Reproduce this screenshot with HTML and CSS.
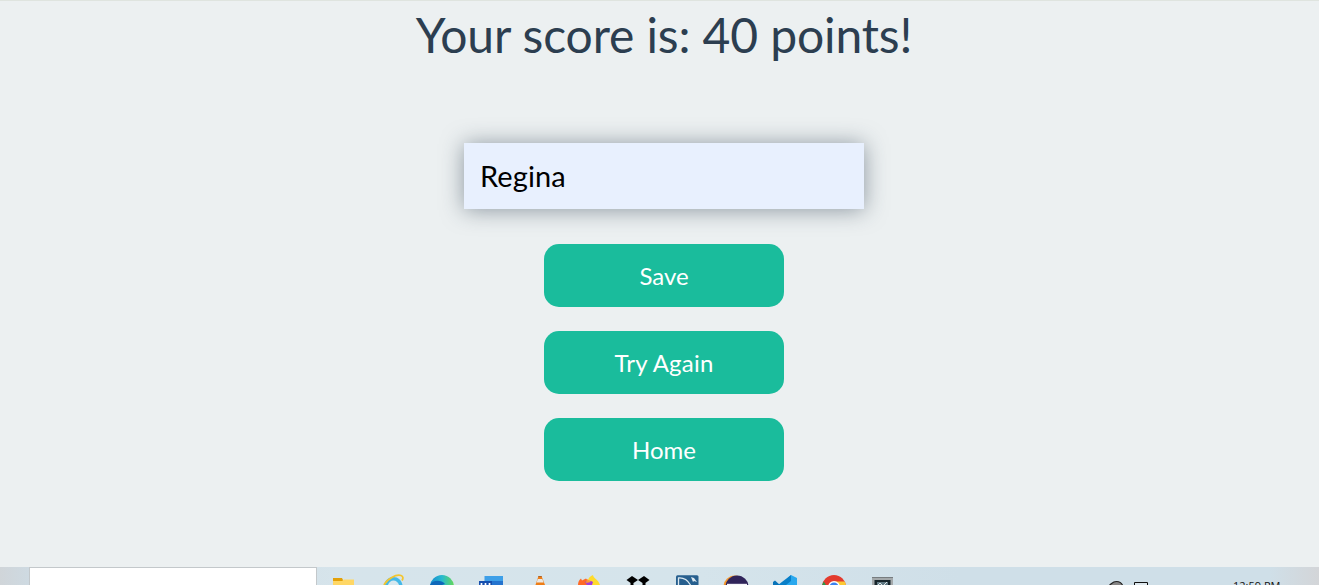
FILE: index.html
```html
<!DOCTYPE html>
<html lang="en">
<head>
<meta charset="utf-8">
<title>Score</title>
<link rel="stylesheet" href="styles.css">
</head>
<body>
<main class="end">
  <h1 class="score">Your score is: 40 points!</h1>
  <form class="form">
    <input class="name" type="text" value="Regina" aria-label="Username">
    <button class="btn" type="button">Save</button>
    <button class="btn btn-again" type="button">Try Again</button>
    <button class="btn" type="button">Home</button>
  </form>
</main>
<footer class="taskbar">
  <div class="search"></div>
  <div class="apps">
    <svg class="app" viewBox="0 0 49 18"><path d="M13 11h9l1 2v5H13z" fill="#e3a008"/><path d="M13 14h9l2-1.500h10V18H13z" fill="#ffd765"/></svg>
    <svg class="app" viewBox="0 0 49 18"><path d="M15 18c1-5 5-8 9.500-8s8 3 9 8" fill="#45b9e8"/><path d="M19 18c1-3 3-4.500 5.500-4.500S29 15 30 18" fill="#d6e8ef"/><path d="M15 18C18 12 27 7 32 8.500c2 .7 2.500 2.500 1 5" fill="none" stroke="#f3c52e" stroke-width="1.800"/></svg>
    <svg class="app" viewBox="0 0 49 18"><defs><linearGradient id="edge"><stop stop-color="#168bd0"/><stop offset=".5" stop-color="#28b9cf"/><stop offset="1" stop-color="#65d958"/></linearGradient></defs><circle cx="24" cy="20" r="12" fill="url(#edge)"/><path d="M12 18c2-5 11-6 15-1l-3 1z" fill="#0f68ba"/></svg>
    <svg class="app" viewBox="0 0 49 18"><path d="M17.500 9H36v6H17.500z" fill="#3d9fe8"/><path d="M17.500 14H36v4H17.500z" fill="#2474cf"/><path d="M12 14h13v4H12z" fill="#164fae"/><path d="M14.500 16v2m4-2v2m4-2v2" fill="none" stroke="#fff" stroke-width="1.700"/></svg>
    <svg class="app" viewBox="0 0 49 18"><path d="M22.500 9h3L29 18h-9.500z" fill="#ee7d16"/><path d="M21.800 12h4.500l1.300 3.500h-7z" fill="#ece9e4"/><path d="M22.500 9h3l.4 1h-3.800z" fill="#a9632c"/></svg>
    <svg class="app" viewBox="0 0 49 18"><path d="M13 18c0-3 1-5 3-6.500l1 2 4-2 3 3v3.500z" fill="#ff6a26"/><path d="M23 13c1-3 3-4 5-5 0 3 5 4 7 10H24z" fill="#ffdb2c"/><path d="M20 15c3-2 6-1 8 0l-1 3h-5z" fill="#a13edb"/><path d="M22 12l4 3-5 1z" fill="#ff9b2d"/></svg>
    <svg class="app" viewBox="0 0 49 18"><path d="M12.500 13L18 9l6 4 6-4 5.500 4-5.500 4-6-4-6 4zM16.500 16h3v2h-3zm12 0h3v2h-3z"/></svg>
    <svg class="app" viewBox="0 0 49 18"><rect x="13" y="8.200" width="22.500" height="22" rx="1.500" fill="#275f8e"/><path d="M15.500 18v-7c5-.5 9 2 12 7" fill="none" stroke="#dce9f1" stroke-width="1.300"/><path d="M28 10l3 1 3 4-3-1-1 1z" fill="#dce9f1"/></svg>
    <svg class="app" viewBox="0 0 49 18"><circle cx="23" cy="20" r="11.500" fill="#f5962a"/><circle cx="25" cy="20" r="11.500" fill="#30245a"/><path d="M15 16.800h20V18H15z" fill="#f5f5fa"/></svg>
    <svg class="app" viewBox="0 0 49 18"><path d="M30 8l6 3v7H20z" fill="#29a8ee"/><path d="M12 15l2-1.500L19 18h-7z" fill="#0873b9"/><path d="M30 8v6l-5 4h-8z" fill="#087fc8"/></svg>
    <svg class="app" viewBox="0 0 49 18"><circle cx="24" cy="20" r="12" fill="#e33b2e"/><path d="M25 14.500h9.700L36 18H25z" fill="#fcc934"/><path d="M12.200 18l1.500-3.500 2.300 3.500z" fill="#279b4b"/><circle cx="24" cy="20" r="5.900" fill="#fff"/><circle cx="24" cy="20" r="4.500" fill="#3c82ed"/></svg>
    <svg class="app" viewBox="0 0 49 18"><path d="M13 10h21v8H13z" fill="#a4a9ab"/><path d="M13 10.500h21" stroke="#777c7f"/><path d="M15.500 13h16v5h-16z" fill="#17252b"/><path d="M18 15h11v3H18z" fill="#607984"/><path d="M19 18l2-2 2 2m2 0l3-3" stroke="#dce4e6" fill="none"/></svg>
  </div>
  <div class="tray">
    <svg class="status" viewBox="0 0 42 18"><path d="M1.500 18c2-1 3-3.500 7-3.500s5 1.500 6 3.500" fill="#858585" stroke="#222" stroke-width="1.200"/><path d="M26.500 18v-2.500h13V18" fill="#dce7ed" stroke="#111"/></svg>
    <span class="clock">12:59 PM</span>
  </div>
</footer>
</body>
</html>
```
FILE: styles.css
```css
* { box-sizing: border-box; }
body {
  margin: 0;
  height: 585px;
  overflow: hidden;
  display: flex;
  flex-direction: column;
  background: #ecf0f1;
  font-family: Lato, sans-serif;
}
.end {
  height: 567px;
  padding-left: 9px;
  border-top: 1px solid #dfe4df;
  display: flex;
  flex-direction: column;
  align-items: center;
}
.score {
  margin: 5px 0 0;
  font-size: 48px;
  font-weight: 400;
  line-height: 58px;
  letter-spacing: -.12px;
  color: #2c3e50;
  white-space: nowrap;
}
.form {
  margin-top: 79px;
  display: flex;
  flex-direction: column;
  align-items: center;
  gap: 24px;
}
.name {
  width: 400px;
  height: 66px;
  margin-bottom: 11px;
  padding: 0 16px 2px;
  border: 0;
  border-radius: 0;
  outline: 0;
  background: #e8f0fe;
  color: #000;
  font: 400 29px Lato, sans-serif;
  letter-spacing: .1px;
  box-shadow: 0 1px 22px 0 rgba(44, 62, 80, .5);
}
.btn {
  width: 240px;
  height: 63px;
  padding: 0;
  border: 0;
  border-radius: 15px;
  background: #1abc9c;
  color: #fff;
  font: 400 24px Lato, sans-serif;
}
.btn-again { letter-spacing: .2px; }
.taskbar {
  height: 18px;
  display: flex;
  overflow: hidden;
  background: linear-gradient(90deg, #d0d5d9 0, #cedae2 30px, #d6e4eb 340px, #d5e4eb 700px, #cfdfe8 960px, #cfdfe8 1270px, #d3d5d8 1319px);
}
.search {
  width: 288px;
  height: 18px;
  margin-left: 29px;
  border: 1px solid #c3c8cb;
  border-bottom: 0;
  background: #fff;
}
.apps {
  display: flex;
  margin-left: 3px;
}
.app {
  width: 49px;
  height: 18px;
}
.tray {
  display: flex;
  margin-left: 200px;
}
.status {
  width: 42px;
  height: 18px;
}
.clock {
  margin: 11px 0 0 83px;
  font: 400 11px/15px "Open Sans", sans-serif;
  color: #111;
  white-space: nowrap;
}
```
